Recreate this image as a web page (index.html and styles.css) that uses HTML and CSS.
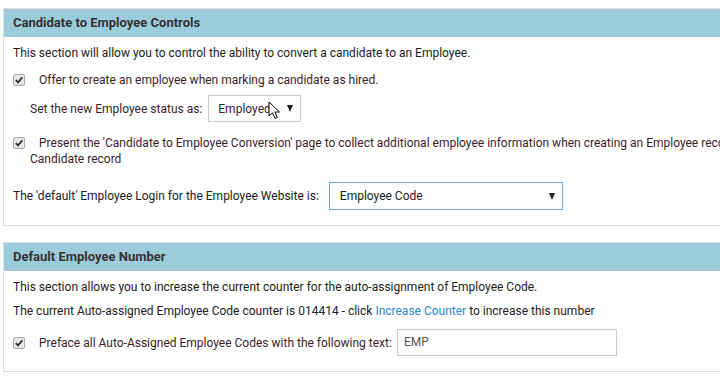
FILE: index.html
```html
<!DOCTYPE html>
<html lang="en">
<head>
    <meta charset="UTF-8">
    <title>Employee Settings</title>
    <link rel="stylesheet" href="styles.css">
</head>
<body>
    <div class="panel">
        <div class="panel-head">Candidate to Employee Controls</div>
        <div class="panel-body">
            <p class="line">This section will allow you to control the ability to convert a candidate to an Employee.</p>
            <div class="check-row first">
                <span class="check"><svg width="10" height="10" viewBox="0 0 10 10"><path d="M1.8 5.2 L4 7.4 L8.3 2.4" fill="none" stroke="#333" stroke-width="1.8"/></svg></span>Offer to create an employee when marking a candidate as hired.
            </div>
            <div class="field-row indent">
                <span class="label">Set the new Employee status as:</span>
                <div class="select status-select">
                    <span class="value">Employed</span>
                    <span class="arrow"></span>
                    <svg class="cursor" width="14" height="20" viewBox="0 0 14 20"><path d="M1 1 L1 15 L4.5 11.8 L7 17.5 L9.3 16.5 L6.9 11 L11.5 11 Z" fill="#fff" stroke="#000" stroke-width="1" stroke-linejoin="round"/></svg>
                </div>
            </div>
            <div class="check-row second">
                <span class="check"><svg width="10" height="10" viewBox="0 0 10 10"><path d="M1.8 5.2 L4 7.4 L8.3 2.4" fill="none" stroke="#333" stroke-width="1.8"/></svg></span>Present the 'Candidate to Employee Conversion' page to collect additional employee information when creating an Employee record from a<br>Candidate record
            </div>
            <div class="field-row login-row">
                <span class="label">The 'default' Employee Login for the Employee Website is:</span>
                <div class="select login-select">
                    <span class="value">Employee Code</span>
                    <span class="arrow"></span>
                </div>
            </div>
        </div>
    </div>

    <div class="panel">
        <div class="panel-head">Default Employee Number</div>
        <div class="panel-body">
            <p class="line">This section allows you to increase the current counter for the auto-assignment of Employee Code.</p>
            <p class="line next">The current Auto-assigned Employee Code counter is 014414 - click <a href="#">Increase Counter</a> to increase this number</p>
            <div class="field-row prefix-row">
                <span class="check"><svg width="10" height="10" viewBox="0 0 10 10"><path d="M1.8 5.2 L4 7.4 L8.3 2.4" fill="none" stroke="#333" stroke-width="1.8"/></svg></span>
                <span class="label check-label">Preface all Auto-Assigned Employee Codes with the following text:</span>
                <div class="text-input">EMP</div>
            </div>
        </div>
    </div>
</body>
</html>
```

FILE: styles.css
```css
body {
    margin: 0;
    font-family: Roboto, "Liberation Sans", sans-serif;
    font-size: 12px;
    color: #222;
    background: #fff;
    overflow: hidden;
}

.panel {
    width: 800px;
    margin: 8px 0 0 3px;
    border: 1px solid #ddd;
}

.panel + .panel {
    margin-top: 16px;
}

.panel-head {
    height: 28px;
    line-height: 28px;
    padding-left: 9px;
    background: #9ccbdc;
    font-size: 13px;
    font-weight: bold;
    color: #333;
}

.panel-body {
    padding: 8px 9px 15px;
}

.line {
    margin: 0;
    line-height: 16px;
}

.line.next {
    margin-top: 8px;
}

a {
    color: #2a8ad4;
    text-decoration: none;
}

.check {
    display: inline-flex;
    align-items: center;
    justify-content: center;
    width: 10px;
    height: 10px;
    border: 1px solid #aaa;
    border-radius: 2px;
    background: #e6e6e6;
    vertical-align: -1px;
}

.check-row {
    padding-left: 17px;
    line-height: 17px;
    color: #3a1e2a;
}

.check-row .check {
    margin-left: -17px;
    margin-right: 14px;
}

.check-row.first {
    margin-top: 11px;
}

.check-row.second {
    margin-top: 13px;
    line-height: 16px;
}

.field-row {
    display: flex;
    align-items: center;
}

.field-row.indent {
    margin-top: 6px;
    padding-left: 17px;
    color: #3a1e2a;
}

.select {
    position: relative;
    display: flex;
    align-items: center;
    justify-content: space-between;
    box-sizing: border-box;
    background: #fff;
    border: 1px solid #ccc;
}

.status-select {
    width: 93px;
    height: 27px;
    margin-left: 6px;
    padding: 0 7px 0 9px;
    color: #3a1e2a;
}

.login-row {
    margin-top: 15px;
}

.login-select {
    width: 234px;
    height: 28px;
    margin-left: 10px;
    padding: 0 7px 0 10px;
    border-color: #7ea6dc;
    color: #222;
}

.arrow {
    width: 0;
    height: 0;
    border-left: 3.5px solid transparent;
    border-right: 3.5px solid transparent;
    border-top: 7px solid #222;
}

.cursor {
    position: absolute;
    left: 59px;
    top: 5px;
}

.prefix-row {
    margin-top: 10px;
    color: #3a1e2a;
}

.prefix-row .check {
    margin-right: 14px;
}

.text-input {
    box-sizing: border-box;
    width: 220px;
    height: 27px;
    line-height: 25px;
    margin-left: 5px;
    padding-left: 6px;
    border: 1px solid #ccc;
    color: #555;
}
```
